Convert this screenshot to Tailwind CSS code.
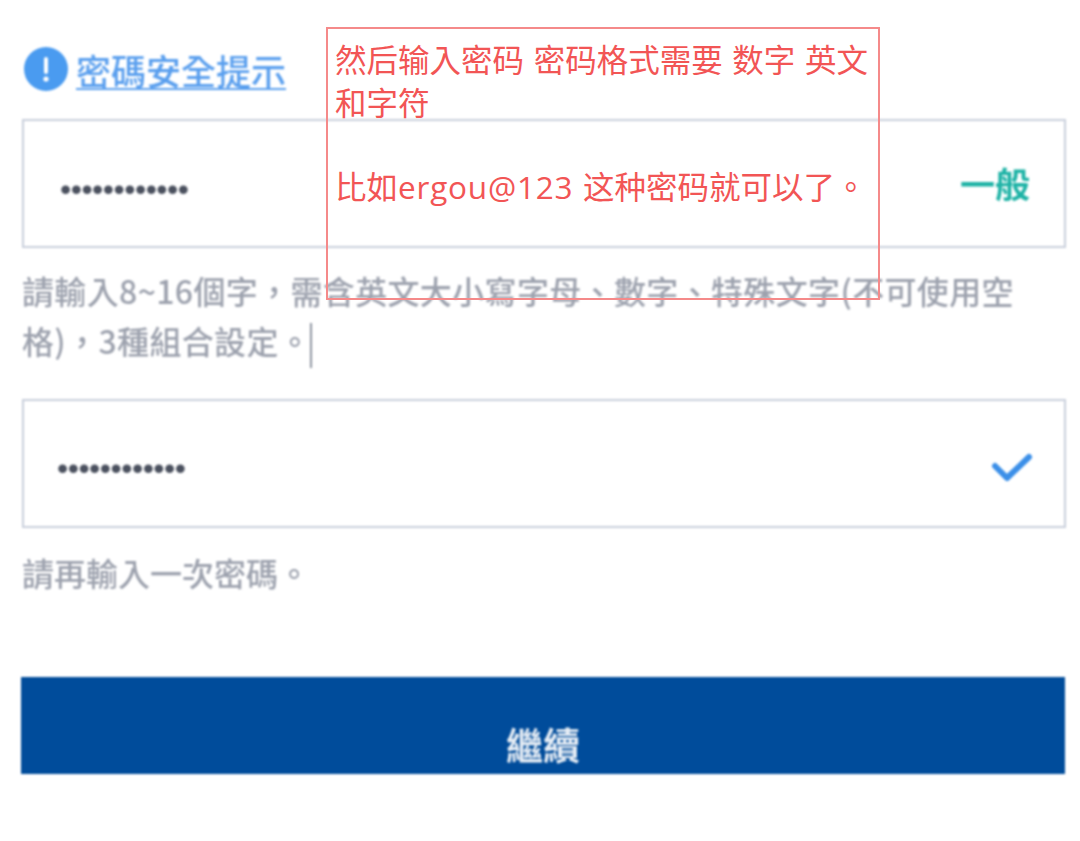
<!DOCTYPE html>
<html lang="zh-Hant">
  <head>
    <meta charset="UTF-8" />
    <meta name="viewport" content="width=device-width, initial-scale=1.0" />
    <title>密碼安全提示</title>
    <script src="https://cdn.jsdelivr.net/npm/@tailwindcss/browser@4"></script>
  </head>
  <body class="bg-white">
    <div class="relative w-[1080px] h-[841px] overflow-hidden font-['Noto_Sans_CJK_JP','Noto_Sans_CJK_TC',sans-serif]">
      <!-- Form -->
      <div class="flex flex-col pl-[22px] pr-[14px] pt-[47px] blur-[1px]">
        <div class="flex items-center h-[46px] pl-[2px] gap-[8px]">
          <svg class="w-[44px] h-[44px] shrink-0 -mt-[2px]" viewBox="0 0 44 44">
            <circle cx="22" cy="22" r="22" fill="#4a9bf0"></circle>
            <rect x="20" y="10" width="4" height="17" rx="2" fill="#fff"></rect>
            <circle cx="22" cy="32" r="2.6" fill="#fff"></circle>
          </svg>
          <a href="#" class="text-[35px] leading-[46px] font-medium text-[#5a9fee] underline underline-offset-[3px] decoration-2">密碼安全提示</a>
        </div>

        <!-- Password -->
        <div class="flex items-center justify-between h-[129px] mt-[26px] border-2 border-[#c9cfdc] pl-[36px] pr-[34px]">
          <span class="pt-[10px] font-['Liberation_Sans',sans-serif] text-[32px] text-[#4a505e] tracking-[-0.5px]">••••••••••••</span>
          <span class="text-[35px] font-bold text-[#1fb3a6]">一般</span>
        </div>
        <p class="w-[1010px] mt-[17px] text-[32px] leading-[50px] tracking-[0.35px] font-medium text-[#9da2ae]">
          請輸入8~16個字，需含英文大小寫字母、數字、特殊文字(不可使用空格)，3種組合設定。<span class="inline-block w-[2px] h-[45px] -ml-px align-middle bg-[#8f95a2]"></span>
        </p>

        <!-- Confirm -->
        <div class="flex items-center justify-between h-[129px] mt-[31px] border-2 border-[#c9cfdc] pl-[33px] pr-[30px]">
          <span class="pt-[10px] font-['Liberation_Sans',sans-serif] text-[32px] text-[#4a505e] tracking-[-0.5px]">••••••••••••</span>
          <svg class="w-[44px] h-[36px] mt-[7px]" viewBox="0 0 44 36" fill="none">
            <path d="M5 17 L17 29 L39 8" stroke="#3b8fe8" stroke-width="6" stroke-linecap="round" stroke-linejoin="round"></path>
          </svg>
        </div>
        <p class="mt-[19px] text-[32px] leading-[50px] font-medium text-[#9da2ae]">請再輸入一次密碼。</p>

        <button class="flex justify-center items-start w-full h-[97px] -ml-px mt-[80px] pt-[40px] bg-[#004c9b] text-[37px] leading-[54px] font-bold text-[#e6edf5]">繼續</button>
      </div>

      <!-- Annotation -->
      <div class="absolute left-[326px] top-[27px] w-[554px] h-[273px] border-2 border-[#f58a8a] pl-[7px] pr-[7px] pt-[9px] text-[31.5px] leading-[43px] [word-spacing:1.5px] text-[#f25555] font-['Open_Sans','Noto_Sans_CJK_SC',sans-serif]">
        <p>然后输入密码 密码格式需要 数字 英文和字符</p>
        <p class="mt-[41px]">比如<span class="tracking-[0.8px]">ergou@123</span> 这种密码就可以了。</p>
      </div>
    </div>
  </body>
</html>
